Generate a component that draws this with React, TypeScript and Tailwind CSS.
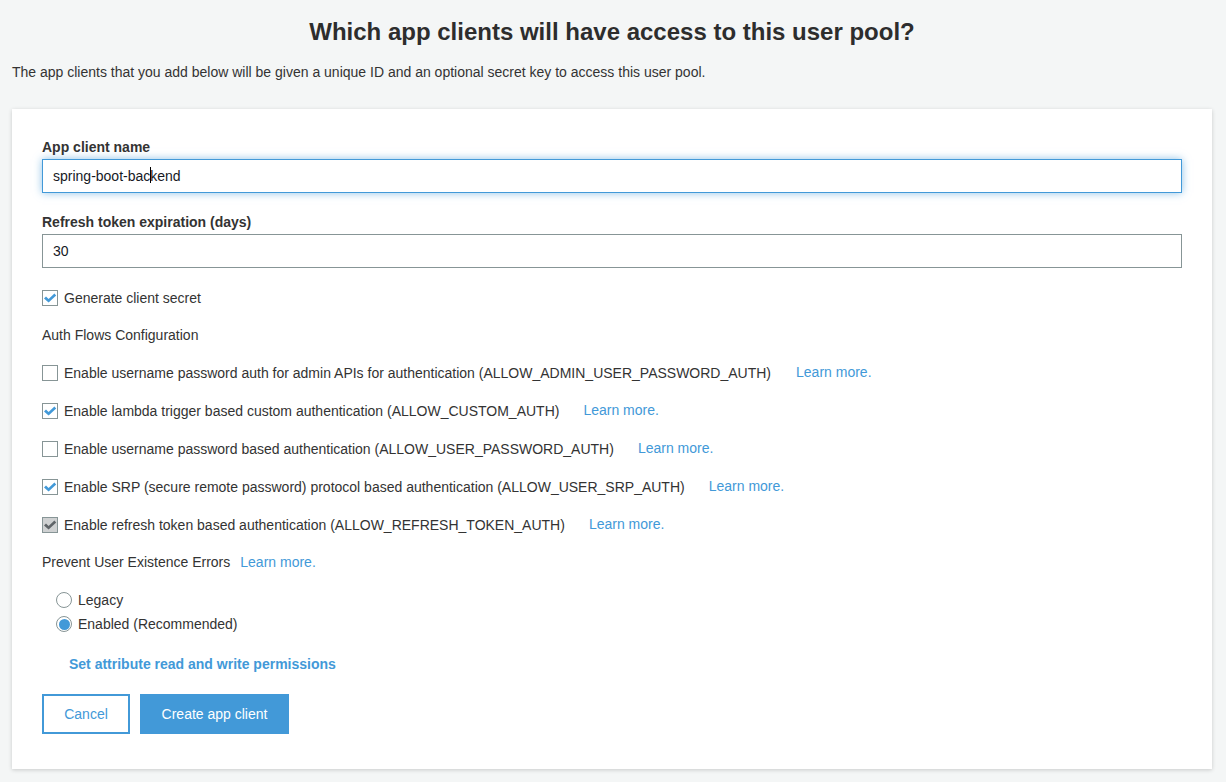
const SANS = "font-['Liberation_Sans',Arial,sans-serif]";

function Tick({ color }: { color: string }) {
  return (
    <svg viewBox="0 0 14 14" className="h-[14px] w-[14px]">
      <path d="M1 7.5 L3 5.6 L5.6 8 L11.4 2.6 L13.2 4.4 L5.6 11.6 Z" fill={color} />
    </svg>
  );
}

function Check({ checked, disabled }: { checked?: boolean; disabled?: boolean }) {
  return (
    <span
      className={`flex h-4 w-4 shrink-0 items-center justify-center border border-[#879596] ${
        disabled ? 'bg-[#cfd1d2]' : 'bg-white'
      }`}
    >
      {checked && <Tick color={disabled ? '#5f6468' : '#4299d8'} />}
    </span>
  );
}

function LearnMore() {
  return <a className="text-[14px] text-[#4299d8]">Learn more.</a>;
}

const flows = [
  { label: 'Enable username password auth for admin APIs for authentication (ALLOW_ADMIN_USER_PASSWORD_AUTH)', gap: 'ml-[25px]' },
  { label: 'Enable lambda trigger based custom authentication (ALLOW_CUSTOM_AUTH)', checked: true, gap: 'ml-6' },
  { label: 'Enable username password based authentication (ALLOW_USER_PASSWORD_AUTH)', gap: 'ml-6' },
  { label: 'Enable SRP (secure remote password) protocol based authentication (ALLOW_USER_SRP_AUTH)', checked: true, gap: 'ml-6' },
  { label: 'Enable refresh token based authentication (ALLOW_REFRESH_TOKEN_AUTH)', checked: true, disabled: true, gap: 'ml-6' },
];

export default function App() {
  return (
    <div className={`${SANS} h-[782px] overflow-hidden bg-[#f4f6f6] px-3 text-[14px] text-[#333333]`}>
      <h1 className="pt-[15px] pr-[2px] text-center text-[24px] leading-[34px] font-bold text-[#2d2d2d]">
        Which app clients will have access to this user pool?
      </h1>
      <p className="mt-[13px] leading-[20px]">
        The app clients that you add below will be given a unique ID and an optional secret key to access this user pool.
      </p>

      <div className="mt-[27px] h-[660px] w-[1200px] bg-white px-[30px] pt-[28px] shadow-[0_1px_4px_rgba(0,0,0,0.18)]">
        <label className="block leading-[20px] font-bold">App client name</label>
        <div className="mt-[2px] flex h-[34px] items-center border border-[#4299d8] px-[10px] text-[#16191f] shadow-[0_0_8px_rgba(66,153,216,0.6)]">
          <span className="relative">
            spring-boot-backend
            <span className="absolute top-[1px] left-[97px] h-[16px] w-px bg-black" />
          </span>
        </div>

        <label className="mt-[19px] block leading-[20px] font-bold">Refresh token expiration (days)</label>
        <div className="mt-[2px] flex h-[34px] items-center border border-[#879596] px-[10px] text-[#16191f]">30</div>

        <div className="mt-[20px] flex h-[20px] items-center gap-[6px]">
          <Check checked />
          <span>Generate client secret</span>
        </div>

        <p className="mt-[17px] leading-[20px]">Auth Flows Configuration</p>

        <div className="mt-[18px] flex flex-col gap-[18px]">
          {flows.map((f) => (
            <div key={f.label} className="flex h-[20px] items-center">
              <Check checked={f.checked} disabled={f.disabled} />
              <span className="ml-[6px]">{f.label}</span>
              <span className={`${f.gap} -translate-y-px`}>
                <LearnMore />
              </span>
            </div>
          ))}
        </div>

        <div className="mt-[17px] flex h-[20px] items-center gap-[10px]">
          <span>Prevent User Existence Errors</span>
          <LearnMore />
        </div>

        <div className="mt-[18px] ml-[14px] flex flex-col gap-[4px]">
          <div className="flex h-[20px] items-center gap-[6px]">
            <span className="h-4 w-4 rounded-full border border-[#879596] bg-white" />
            <span>Legacy</span>
          </div>
          <div className="flex h-[20px] items-center gap-[6px]">
            <span className="flex h-4 w-4 items-center justify-center rounded-full border border-[#879596] bg-white">
              <span className="h-[11px] w-[11px] rounded-full bg-[#4299d8]" />
            </span>
            <span>Enabled (Recommended)</span>
          </div>
        </div>

        <a className="mt-[20px] ml-[27px] block leading-[20px] font-bold text-[#4299d8]">
          Set attribute read and write permissions
        </a>

        <div className="mt-[20px] flex gap-[10px]">
          <button className="h-10 w-[88px] border-2 border-[#4299d8] bg-white text-[#4299d8]">Cancel</button>
          <button className="h-10 w-[149px] bg-[#4299d8] text-white">Create app client</button>
        </div>
      </div>
    </div>
  );
}
